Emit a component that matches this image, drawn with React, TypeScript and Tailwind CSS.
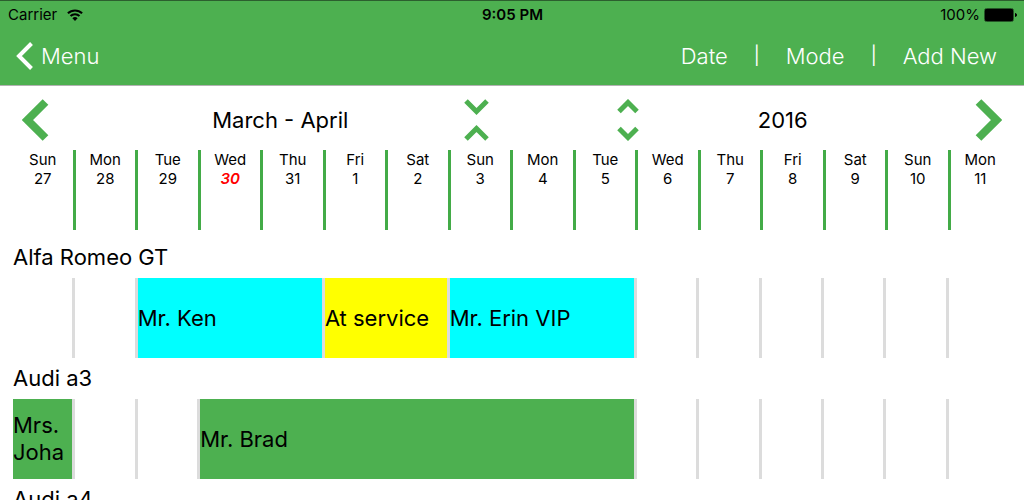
import clsx from "clsx";

type Day = { name: string; num: number; today?: boolean };

type Booking = { label: string; place: string; color: string };

type Car = { name: string; bookings: Booking[] };

const days: Day[] = [
  { name: "Sun", num: 27 },
  { name: "Mon", num: 28 },
  { name: "Tue", num: 29 },
  { name: "Wed", num: 30, today: true },
  { name: "Thu", num: 31 },
  { name: "Fri", num: 1 },
  { name: "Sat", num: 2 },
  { name: "Sun", num: 3 },
  { name: "Mon", num: 4 },
  { name: "Tue", num: 5 },
  { name: "Wed", num: 6 },
  { name: "Thu", num: 7 },
  { name: "Fri", num: 8 },
  { name: "Sat", num: 9 },
  { name: "Sun", num: 10 },
  { name: "Mon", num: 11 },
];

const cars: Car[] = [
  {
    name: "Alfa Romeo GT",
    bookings: [
      { label: "Mr. Ken", place: "col-start-3 col-end-6", color: "bg-[#00ffff]" },
      { label: "At service", place: "col-start-6 col-end-8", color: "bg-[#ffff00]" },
      { label: "Mr. Erin VIP", place: "col-start-8 col-end-11", color: "bg-[#00ffff]" },
    ],
  },
  {
    name: "Audi a3",
    bookings: [
      { label: "Mrs. Joha", place: "col-start-1 col-end-2", color: "bg-[#4db050]" },
      { label: "Mr. Brad", place: "col-start-4 col-end-11", color: "bg-[#4db050]" },
    ],
  },
  { name: "Audi a4", bookings: [] },
];

function StatusBar() {
  return (
    <div className="grid h-[27px] grid-cols-3 items-center pl-2 pr-[7px] text-[15px] leading-5 text-black">
      <div className="flex items-center gap-[10px]">
        <span>Carrier</span>
        <svg className="h-3 w-4" viewBox="0 0 16 12" fill="none" stroke="black" strokeWidth="2">
          <path d="M.9 4.3a10.1 10.1 0 0 1 14.2 0" />
          <path d="M3.5 7a6.4 6.4 0 0 1 9 0" />
          <path d="M8 12 5.4 9.2a3.7 3.7 0 0 1 5.2 0z" fill="black" stroke="none" />
        </svg>
      </div>
      <span className="text-center font-semibold">9:05 PM</span>
      <div className="flex items-center justify-end gap-1">
        <span>100%</span>
        <svg className="h-[14px] w-[33px]" viewBox="0 0 33 14">
          <rect x=".5" y=".5" width="29" height="13" rx="2" fill="none" stroke="#255527" />
          <rect x="1" y="1" width="28" height="12" rx="1" fill="black" />
          <path d="M31 5c1.200.3 2 1 2 2s-.8 1.700-2 2z" fill="black" />
        </svg>
      </div>
    </div>
  );
}

function NavBar() {
  return (
    <nav className="flex h-[57px] items-center justify-between pb-px pl-4 pr-[27px] text-[22px] font-light leading-7 text-white">
      <button className="flex items-center gap-2">
        <svg className="h-7 w-[17px]" viewBox="0 0 17 28" fill="none" stroke="white" strokeWidth="4">
          <path d="M15.500 1.500 3 14l12.500 12.500" />
        </svg>
        Menu
      </button>
      <div className="flex items-center gap-[26px]">
        <button>Date</button>
        <span className="text-[18px] font-normal">|</span>
        <button>Mode</button>
        <span className="text-[18px] font-normal">|</span>
        <button>Add New</button>
      </div>
    </nav>
  );
}

function PeriodBar() {
  return (
    <div className="flex h-16 items-center px-[22px] pt-1 text-[22px] leading-7">
      <button aria-label="Previous period">
        <svg className="h-[42px] w-[27px]" viewBox="0 0 27 42" fill="none" stroke="#4db050" strokeWidth="8">
          <path d="M23.500 3 5.500 21l18 18" />
        </svg>
      </button>
      <span className="ml-12 grow-[366] basis-0 text-center">March - April</span>
      <button aria-label="Show fewer days">
        <svg className="h-[42px] w-[25px]" viewBox="0 0 25 42" fill="none" stroke="#4db050" strokeWidth="5">
          <path d="m2 2 10.500 10.500L23 2M2 40l10.500-10.500L23 40" />
        </svg>
      </button>
      <button className="ml-32" aria-label="Show more days">
        <svg className="h-[42px] w-[22px]" viewBox="0 0 22 42" fill="none" stroke="#4db050" strokeWidth="5">
          <path d="m2 12.500 9-9 9 9M2 29.500l9 9 9-9" />
        </svg>
      </button>
      <span className="mr-12 grow-[288] basis-0 text-center">2016</span>
      <button aria-label="Next period">
        <svg className="h-[42px] w-[27px]" viewBox="0 0 27 42" fill="none" stroke="#4db050" strokeWidth="8">
          <path d="m3.500 3 18 18-18 18" />
        </svg>
      </button>
    </div>
  );
}

function DayHeader() {
  return (
    <div className="grid grid-cols-16 pl-[13px] pr-[11px]">
      {days.map((d) => (
        <div
          key={d.num}
          className="h-20 border-r-[3px] border-[#43ab47] text-center text-[15px] leading-[19px] last:border-transparent"
        >
          <div>{d.name}</div>
          <div className={clsx(d.today && "font-semibold italic text-[#ff0000]")}>{d.num}</div>
        </div>
      ))}
    </div>
  );
}

function CarRow({ car }: { car: Car }) {
  return (
    <section className="px-[13px]">
      <h2 className="text-[22px] leading-[41px]">{car.name}</h2>
      <div className="grid h-20 grid-cols-16 grid-rows-1">
        {days.map((d, i) => (
          <div
            key={i}
            style={{ gridColumnStart: i + 1 }}
            className="row-start-1 border-r-[3px] border-[#dcdcdc] last-of-type:border-transparent"
          />
        ))}
        {car.bookings.map((b) => (
          <button
            key={b.label}
            className={clsx(
              "row-start-1 mr-[3px] flex items-center overflow-hidden text-left text-[22px] leading-[27px]",
              b.place,
              b.color
            )}
          >
            {b.label}
          </button>
        ))}
      </div>
    </section>
  );
}

export default function App() {
  return (
    <div className="flex h-screen flex-col overflow-hidden bg-white font-['Inter',sans-serif] text-black">
      <header className="shrink-0 border-b border-t border-b-[#b2b2b2] border-t-[#2c5f2e] bg-[#4db050]">
        <StatusBar />
        <NavBar />
      </header>
      <main className="min-h-0 flex-1 overflow-hidden">
        <PeriodBar />
        <DayHeader />
        <div className="pt-[7px]">
          {cars.map((car) => (
            <CarRow key={car.name} car={car} />
          ))}
        </div>
      </main>
    </div>
  );
}
